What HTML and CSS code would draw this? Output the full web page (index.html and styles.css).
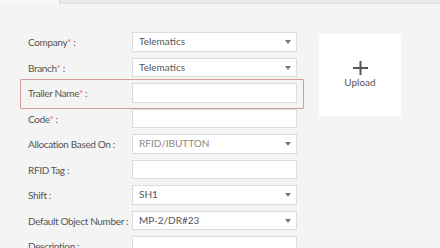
FILE: index.html
```html
<!DOCTYPE html>
<html lang="en">
<head>
    <meta charset="UTF-8">
    <meta name="viewport" content="width=device-width, initial-scale=1.0">
    <title>Trailer - Add</title>
    <link rel="stylesheet" href="styles.css">
</head>
<body>
    <div class="tab-bar">
        <div class="tab active"></div>
        <div class="tab-rest"></div>
    </div>

    <div class="form-wrap">
        <div class="fields">
            <div class="row">
                <label class="label">Company<span class="req">*</span> :</label>
                <div class="input select">Telematics<span class="caret"></span></div>
            </div>
            <div class="row">
                <label class="label">Branch<span class="req">*</span> :</label>
                <div class="input select">Telematics<span class="caret"></span></div>
            </div>
            <div class="row highlight">
                <label class="label">Trailer Name<span class="req">*</span> :</label>
                <div class="input"></div>
            </div>
            <div class="row">
                <label class="label">Code<span class="req">*</span> :</label>
                <div class="input"></div>
            </div>
            <div class="row">
                <label class="label">Allocation Based On :</label>
                <div class="input select muted">RFID/IBUTTON<span class="caret"></span></div>
            </div>
            <div class="row">
                <label class="label">RFID Tag :</label>
                <div class="input"></div>
            </div>
            <div class="row">
                <label class="label">Shift :</label>
                <div class="input select">SH1<span class="caret"></span></div>
            </div>
            <div class="row">
                <label class="label">Default Object Number :</label>
                <div class="input select">MP-2/DR#23<span class="caret"></span></div>
            </div>
            <div class="row">
                <label class="label">Description :</label>
                <div class="input"></div>
            </div>
        </div>

        <div class="upload">
            <svg class="plus" width="15" height="14" viewBox="0 0 15 14">
                <path d="M7.5 0 V14 M0 7 H15" stroke="#555" stroke-width="2" fill="none"/>
            </svg>
            <span class="upload-text">Upload</span>
        </div>
    </div>
</body>
</html>
```

FILE: styles.css
```css
:root {
    --bg: #f4f4f4;
    --border: #dcdcdc;
    --text: #555;
    --required: #e57373;
    --white: #ffffff;
}

* {
    margin: 0;
    padding: 0;
    box-sizing: border-box;
}

body {
    font-family: Lato, 'Open Sans', sans-serif;
    font-size: 10px;
    color: var(--text);
    background: var(--bg);
    overflow: hidden;
}

/* tab strip at the very top */
.tab-bar {
    display: flex;
    height: 4px;
}

.tab.active {
    width: 60px;
    background: #f8f8f8;
    border-right: 1px solid #d6d6d6;
}

.tab-rest {
    flex: 1;
    background: #e9e9e9;
    border-bottom: 1px solid #dedede;
}

.form-wrap {
    display: flex;
    align-items: flex-start;
    gap: 15px;
    padding: 25.25px 0 0 20px;
}

.fields {
    width: 284px;
}

.row {
    position: relative;
    display: flex;
    align-items: center;
    height: 25.5px;
    padding: 0 7px 0 8px;
}

.row.highlight::after {
    content: "";
    position: absolute;
    left: 0;
    right: 0;
    top: -1px;
    bottom: -3px;
    border: 1px solid #d99a9a;
    border-radius: 1px;
}

.label {
    width: 104px;
    flex-shrink: 0;
    white-space: nowrap;
    letter-spacing: -0.35px;
}

.req {
    color: var(--required);
}

.input {
    position: relative;
    width: 165px;
    height: 19.5px;
    line-height: 17.5px;
    padding: 0 6px;
    background: var(--white);
    border: 1px solid var(--border);
    color: var(--text);
    font-size: 10px;
}

.input.muted {
    color: #888;
}

.caret {
    position: absolute;
    right: 5px;
    top: 7px;
    width: 0;
    height: 0;
    border-left: 3px solid transparent;
    border-right: 3px solid transparent;
    border-top: 4px solid #777;
}

.upload {
    width: 82px;
    height: 82px;
    margin-top: 4.75px;
    background: var(--white);
    display: flex;
    flex-direction: column;
    align-items: center;
    justify-content: center;
}

.plus {
    margin-top: -2px;
}

.upload-text {
    font-size: 10px;
    margin-top: 1px;
}
```
